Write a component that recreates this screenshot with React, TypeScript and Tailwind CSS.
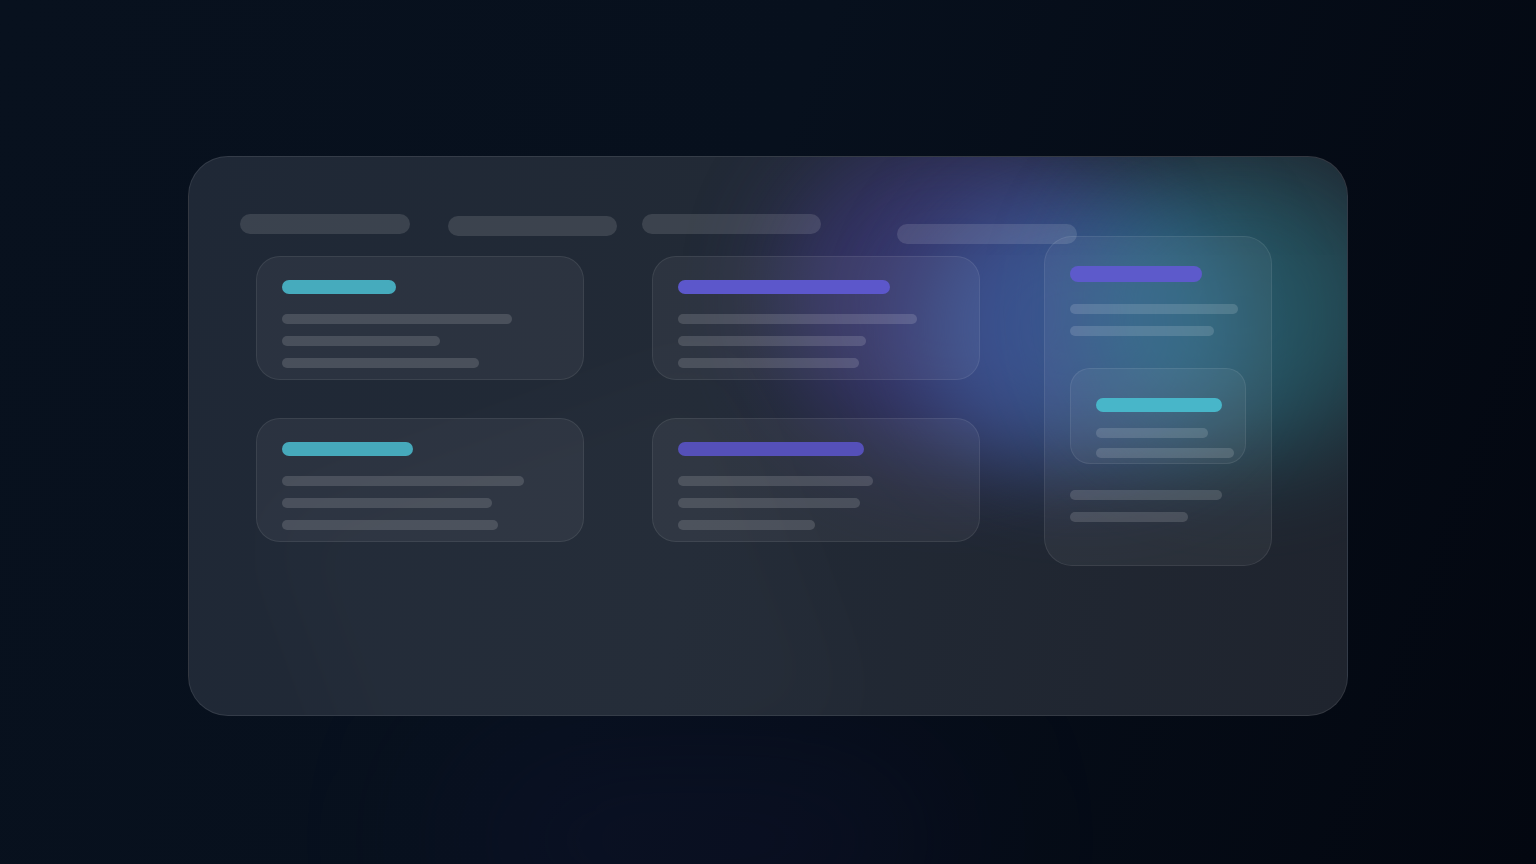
import React from "react";

function Line({ w, className = "" }: { w: number; className?: string }) {
  return <div className={`h-[10px] rounded-full bg-white/[0.14] ${className}`} style={{ width: w }} />;
}

function Card({ color, title, lines }: { color: string; title: number; lines: number[] }) {
  return (
    <div className="w-[328px] h-[124px] rounded-[24px] border border-white/[0.08] bg-white/[0.05] pl-[25px] pt-[23px] flex flex-col">
      <div className={`h-[14px] rounded-full ${color}`} style={{ width: title }} />
      <div className="mt-5 flex flex-col gap-3">
        {lines.map((l, i) => (
          <Line key={i} w={l} />
        ))}
      </div>
    </div>
  );
}

export default function App() {
  return (
    <div className="w-[1536px] h-[864px] overflow-hidden relative bg-[#07101c] font-['Inter',sans-serif]">
      <div className="absolute inset-0 bg-[linear-gradient(110deg,#08111e_0%,#07101d_45%,#030710_100%)]" />
      <div className="absolute left-[450px] top-[740px] w-[500px] h-[200px] rounded-full bg-[#141437] opacity-30 blur-[80px]" />
      <div className="relative pt-[156px] pl-[188px]">
        <div className="relative w-[1160px] h-[560px] rounded-[40px] border border-white/[0.09] overflow-hidden bg-[linear-gradient(100deg,#1f2836_0%,#222a36_45%,#1f242e_100%)]">
          {/* glow */}
          <div className="absolute left-[590px] top-[-20px] w-[350px] h-[320px] rounded-full bg-[#4f43a8] opacity-45 blur-[50px]" />
          <div className="absolute left-[730px] top-[30px] w-[330px] h-[280px] rounded-full bg-[#3f66a8] opacity-60 blur-[45px]" />
          <div className="absolute left-[890px] top-[10px] w-[320px] h-[290px] rounded-full bg-[#2a8491] opacity-45 blur-[50px]" />
          <div className="absolute left-[120px] top-[260px] w-[500px] h-[400px] rotate-[-20deg] bg-white opacity-[0.012] blur-[40px]" />

          <div className="relative z-10 pl-[51px] pt-[57px]">
            {/* header */}
            <div className="flex items-start h-5">
              <div className="w-[170px] h-5 rounded-full bg-white/[0.12]" />
              <div className="w-[169px] h-5 rounded-full bg-white/[0.12] ml-[38px] mt-[2px]" />
              <div className="w-[179px] h-5 rounded-full bg-white/[0.12] ml-[25px]" />
              <div className="w-[180px] h-5 rounded-full bg-white/[0.12] ml-[76px] mt-[10px]" />
            </div>
            {/* body */}
            <div className="flex items-start pl-4 mt-[2px]">
              <div className="mt-5 grid grid-cols-[328px_328px] gap-x-[68px] gap-y-[38px]">
                <Card color="bg-[#46abbd]" title={114} lines={[230, 158, 197]} />
                <Card color="bg-[#5c57cb]" title={212} lines={[239, 188, 181]} />
                <Card color="bg-[#46a9bb]" title={131} lines={[242, 210, 216]} />
                <Card color="bg-[#5550b9]" title={186} lines={[195, 182, 137]} />
              </div>
              <div className="ml-[64px] w-[228px] h-[330px] rounded-[28px] border border-white/[0.08] bg-white/[0.05] pl-[25px] pt-[29px] flex flex-col">
                <div className="w-[132px] h-4 rounded-full bg-[#5d5acb]" />
                <div className="mt-[22px] flex flex-col gap-3">
                  <Line w={168} />
                  <Line w={144} />
                </div>
                <div className="mt-8 w-[176px] h-[96px] rounded-[20px] border border-white/[0.08] bg-white/[0.05] pl-[25px] pt-[29px] flex flex-col">
                  <div className="w-[126px] h-[14px] rounded-full bg-[#48b6c9]" />
                  <div className="mt-4 flex flex-col gap-[10px]">
                    <Line w={112} />
                    <Line w={138} />
                  </div>
                </div>
                <div className="mt-[26px] flex flex-col gap-3">
                  <Line w={152} />
                  <Line w={118} />
                </div>
              </div>
            </div>
          </div>
        </div>
      </div>
    </div>
  );
}
